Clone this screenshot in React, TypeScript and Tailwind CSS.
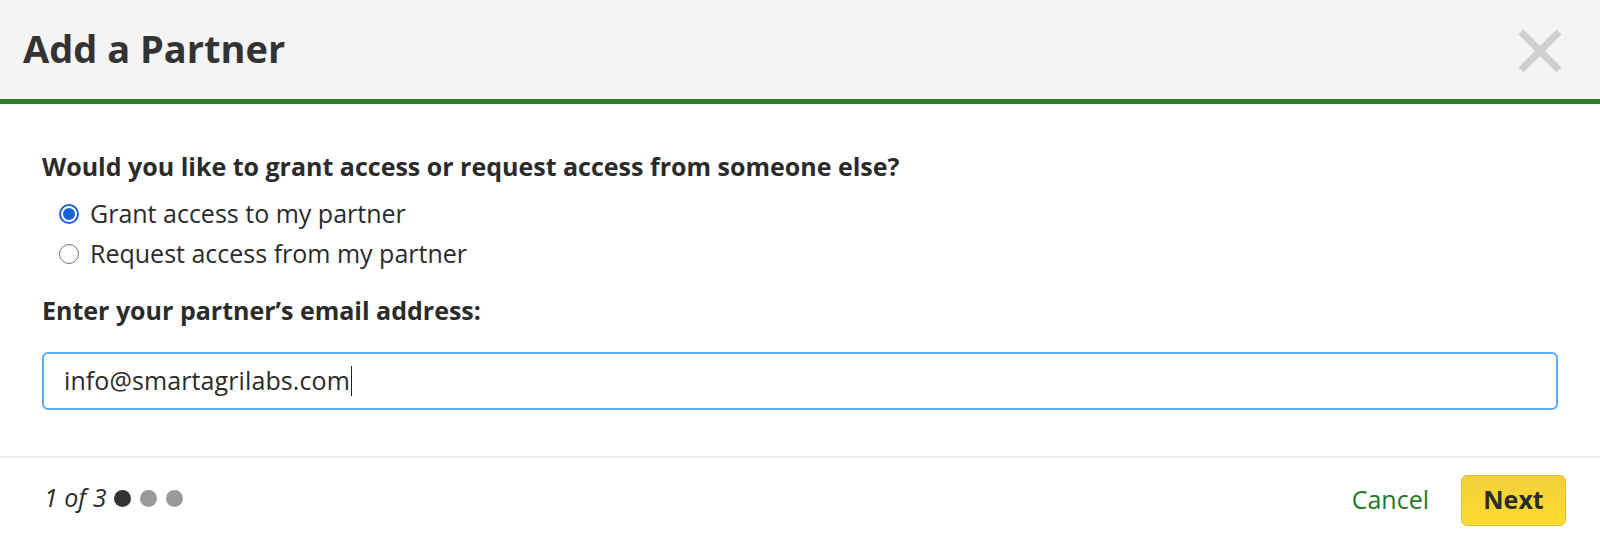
import React from "react";

export default function App() {
  return (
    <div className="w-[1600px] h-[540px] bg-white overflow-hidden text-[#2b2b2b]" style={{ fontFamily: '"Open Sans", "Noto Sans", sans-serif' }}>
      <div className="h-[104px] bg-[#f4f4f4] border-b-[5px] border-[#2e7b27] flex items-center justify-between pl-[23px] pr-[37px]">
        <h1 className="text-[38px] font-bold text-[#333333] leading-none mt-[-3px]">Add a Partner</h1>
        <svg width="46" height="46" viewBox="0 0 46 46" className="mt-[2px]">
          <path d="M4 4 L42 42 M42 4 L4 42" stroke="#cfcfcf" strokeWidth="7" />
        </svg>
      </div>
      <div className="px-[42px] pt-[45px]">
        <p className="text-[25px] font-bold leading-[34px]">Would you like to grant access or request access from someone else?</p>
        <div className="mt-[11px] pl-[17px] flex flex-col">
          <label className="flex items-center h-[40px] text-[25px] gap-[11px]">
            <span className="w-[20px] h-[20px] rounded-full border-[2px] border-[#1a63d3] flex items-center justify-center">
              <span className="w-[12px] h-[12px] rounded-full bg-[#1a63d3]" />
            </span>
            <span>Grant access to my partner</span>
          </label>
          <label className="flex items-center h-[40px] text-[25px] gap-[11px]">
            <span className="w-[20px] h-[20px] rounded-full border-[1.5px] border-[#767676]" />
            <span>Request access from my partner</span>
          </label>
        </div>
        <p className="mt-[19px] text-[25px] font-bold leading-[34px]">Enter your partner’s email address:</p>
        <div className="mt-[25px] h-[58px] rounded-[6px] border-[2px] border-[#5eaaeb] flex items-center pl-[20px] text-[25px] tracking-[0.1px]">
          <span>info@smartagrilabs.com</span>
          <span className="w-[1.5px] h-[30px] bg-[#222] ml-[1px]" />
        </div>
      </div>
      <div className="mt-[46px] border-t-[2px] border-[#ececec] h-[82px] flex items-center justify-between pl-[44px] pr-[34px]">
        <div className="flex items-center">
          <span className="italic text-[25px] mr-[8px]">1 of 3</span>
          <span className="w-[17px] h-[17px] rounded-full bg-[#333333]" />
          <span className="w-[17px] h-[17px] rounded-full bg-[#9a9a9a] ml-[9px]" />
          <span className="w-[17px] h-[17px] rounded-full bg-[#9a9a9a] ml-[9px]" />
        </div>
        <div className="flex items-center gap-[32px] mt-[4px]">
          <button className="text-[25px] text-[#1f7a1f]">Cancel</button>
          <button className="w-[105px] h-[51px] rounded-[6px] border border-[#dcc04a] bg-gradient-to-b from-[#f3cf3a] to-[#fddc30] text-[25px] font-bold text-[#2b2b2b]">Next</button>
        </div>
      </div>
    </div>
  );
}
